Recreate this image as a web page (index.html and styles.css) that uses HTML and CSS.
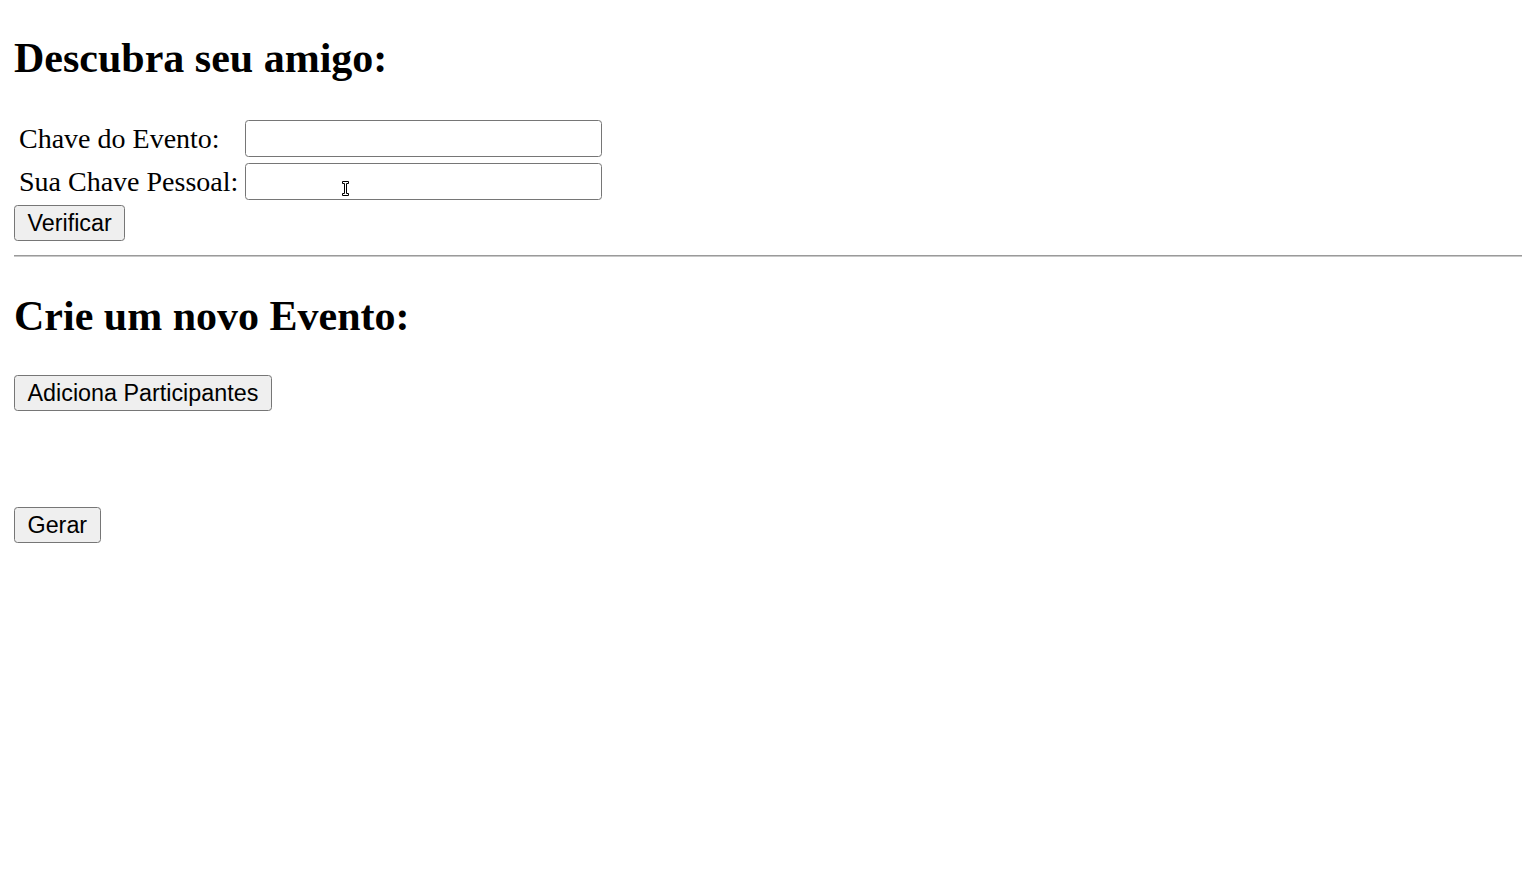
FILE: index.html
```html
<!DOCTYPE html>
<html lang="pt">
<head>
<meta charset="utf-8">
<title>Amigo Secreto</title>
<link rel="stylesheet" href="styles.css">
</head>
<body>
<h1 class="title first">Descubra seu amigo:</h1>
<form class="check-form">
  <table class="keys">
    <tr>
      <td class="label">Chave do Evento:</td>
      <td class="cell"><input class="field" type="text"></td>
    </tr>
    <tr>
      <td class="label">Sua Chave Pessoal:</td>
      <td class="cell field-wrap"><input class="field" type="text"><svg class="ibeam" width="8" height="16" viewBox="0 0 8 16"><path d="M0.5 0.5H6.5V2.5H4.5V12.5H6.5V14.5H0.5V12.5H2.5V2.5H0.5Z" fill="#fff" stroke="#000" stroke-width="1"/></svg></td>
    </tr>
  </table>
  <button class="btn verify" type="button">Verificar</button>
</form>
<hr class="divider">
<h2 class="title second">Crie um novo Evento:</h2>
<div class="participants"><button class="btn" type="button">Adiciona Participantes</button></div>
<div class="participant-list"></div>
<button class="btn" type="button">Gerar</button>
</body>
</html>
```
FILE: styles.css
```css
html, body {
  background: #fff;
}
body {
  margin: 0;
  padding: 0 0 0 14px;
  font-family: "Liberation Serif", "Times New Roman", serif;
  font-size: 28px;
  color: #000;
}
.title {
  font-size: 42px;
  font-weight: bold;
  line-height: 48px;
  margin: 0;
}
.first {
  margin-top: 34px;
  margin-bottom: 33.5px;
}
.second {
  margin-top: 34.86px;
  margin-bottom: 34.86px;
}
.check-form {
  margin: 0;
}
.keys {
  border-collapse: separate;
  border-spacing: 3px;
  margin: 0;
}
.keys td {
  padding: 1.5px;
  vertical-align: middle;
}
.label {
  line-height: 32px;
  white-space: nowrap;
  padding-left: 2px !important;
  padding-right: 2.5px !important;
}
.field-wrap {
  position: relative;
}
.field {
  display: block;
  box-sizing: border-box;
  width: 357px;
  height: 37px;
  margin: 0;
  border: 1.5px solid #767676;
  border-radius: 3.5px;
  background: #fff;
  font-family: "Liberation Sans", Arial, sans-serif;
  font-size: 23px;
}
.ibeam {
  position: absolute;
  left: 98px;
  top: 19.5px;
}
.btn {
  display: block;
  box-sizing: border-box;
  height: 36px;
  margin: 0;
  padding: 0 12.5px;
  border: 1.5px solid #767676;
  border-radius: 3.5px;
  background: #efefef;
  color: #000;
  font-family: "Liberation Sans", Arial, sans-serif;
  font-size: 23.33px;
  line-height: 32px;
}
.verify {
  margin-top: 0.5px;
}
.divider {
  margin: 14px 0 15px;
  height: 0;
  border: 0;
  border-top: 1px solid #9a9a9a;
  border-bottom: 1px solid #c8c8c8;
}
.participants {
  margin: 0;
}
.participant-list {
  height: 96px;
}
```
